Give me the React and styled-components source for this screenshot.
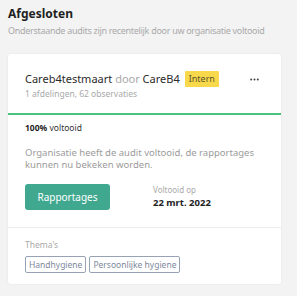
import styled, { createGlobalStyle } from 'styled-components';

const Global = createGlobalStyle`
	body {
		margin: 0;
		background: #f3f3f3;
		font-family: 'Noto Sans', 'Open Sans', sans-serif;
		color: #222;
	}
`;

const Page = styled.div`
	padding: 6px 16px 12px 8px;
`;

const Heading = styled.h2`
	margin: 0;
	font-size: 12px;
	font-weight: 700;
	line-height: 16px;
	color: #1f1f1f;
`;

const Sub = styled.p`
	margin: 3px 0 17px;
	font-size: 9px;
	letter-spacing: -0.3px;
	line-height: 12px;
	white-space: nowrap;
	color: #a9a9a9;
`;

const Card = styled.div`
	background: #fff;
	border-radius: 3px;
	box-shadow: 0 0 2px rgba(0, 0, 0, 0.08);
`;

const Section = styled.div`
	padding: ${(p) => p.$pad};
	border-bottom: ${(p) => p.$line || 'none'};
`;

const TitleRow = styled.div`
	display: flex;
	align-items: center;
	gap: 5px;
	height: 16px;
`;

const Title = styled.div`
	font-size: 11px;
	line-height: 16px;
	white-space: nowrap;
	color: #2b2b2b;
`;

const Muted = styled.span`
	color: #a9a9a9;
`;

const Badge = styled.span`
	background: #f8d94c;
	color: #5d5328;
	font-size: 9px;
	line-height: 16px;
	padding: 0 4px;
	border-radius: 1px;
`;

const More = styled.svg`
	margin-left: auto;
	width: 9px;
	height: 3px;
`;

const Meta = styled.div`
	margin-top: 1px;
	font-size: 8.5px;
	line-height: 12px;
	color: #a9a9a9;
`;

const Progress = styled.div`
	font-size: 8.5px;
	line-height: 12px;
	color: #333;
	b {
		font-weight: 700;
		color: #1f1f1f;
	}
`;

const Desc = styled.p`
	margin: 12.5px 0 0;
	font-size: 9.5px;
	line-height: 12.5px;
	color: #9b9b9b;
`;

const ActionRow = styled.div`
	display: flex;
	align-items: flex-start;
	gap: 43px;
	margin-top: 12px;
`;

const Button = styled.button`
	width: 85px;
	height: 26px;
	border: 0;
	border-radius: 3px;
	background: #3fa88f;
	color: #fff;
	font-family: inherit;
	font-size: 10px;
	padding: 0;
`;

const Done = styled.div`
	display: flex;
	flex-direction: column;
`;

const DoneLabel = styled.span`
	font-size: 8px;
	line-height: 11px;
	color: #aaa;
`;

const DoneDate = styled.span`
	font-size: 9.5px;
	line-height: 15px;
	font-weight: 700;
	color: #222;
`;

const Label = styled.div`
	font-size: 8.5px;
	line-height: 12px;
	color: #aaa;
`;

const Tags = styled.div`
	display: flex;
	gap: 3px;
	margin-top: 5px;
`;

const Tag = styled.span`
	border: 1px solid #97a3b5;
	border-radius: 2px;
	padding: 0 3px;
	font-size: 8.5px;
	line-height: 15px;
	color: #7d889b;
`;

export default function App() {
	return (
		<>
			<Global />
			<Page>
				<Heading>Afgesloten</Heading>
				<Sub>Onderstaande audits zijn recentelijk door uw organisatie voltooid</Sub>
				<Card>
					<Section $pad="17px 22px 13px 17px" $line="2px solid #4cc27f">
						<TitleRow>
							<Title>
								Careb4testmaart <Muted>door</Muted> CareB4
							</Title>
							<Badge>Intern</Badge>
							<More viewBox="0 0 9 3">
								<circle cx="1.2" cy="1.5" r="1" fill="#444" />
								<circle cx="4.5" cy="1.5" r="1" fill="#444" />
								<circle cx="7.8" cy="1.5" r="1" fill="#444" />
							</More>
						</TitleRow>
						<Meta>1 afdelingen, 62 observaties</Meta>
					</Section>
					<Section $pad="7px 17px 17px" $line="1px solid #ececec">
						<Progress>
							<b>100%</b> voltooid
						</Progress>
						<Desc>Organisatie heeft de audit voltooid, de rapportages kunnen nu bekeken worden.</Desc>
						<ActionRow>
							<Button>Rapportages</Button>
							<Done>
								<DoneLabel>Voltooid op</DoneLabel>
								<DoneDate>22 mrt. 2022</DoneDate>
							</Done>
						</ActionRow>
					</Section>
					<Section $pad="11px 17px 11px">
						<Label>Thema's</Label>
						<Tags>
							<Tag>Handhygiene</Tag>
							<Tag>Persoonlijke hygiene</Tag>
						</Tags>
					</Section>
				</Card>
			</Page>
		</>
	);
}
